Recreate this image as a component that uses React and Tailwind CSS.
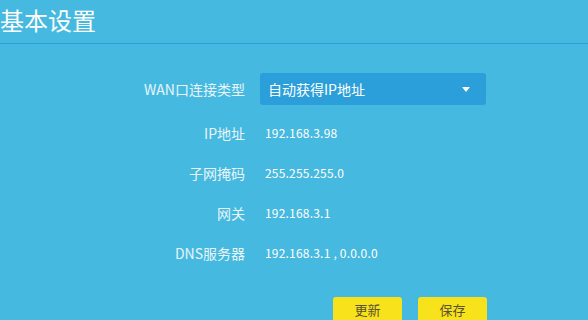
const rows = [
  { label: 'IP地址', value: '192.168.3.98' },
  { label: '子网掩码', value: '255.255.255.0' },
  { label: '网关', value: '192.168.3.1' },
  { label: 'DNS服务器', value: '192.168.3.1 , 0.0.0.0' },
]

function App() {
  return (
    <div
      className="h-[320px] w-[588px] overflow-hidden bg-[#46b9e0] text-white"
      style={{ fontFamily: '"Microsoft YaHei", "Noto Sans CJK SC", sans-serif' }}
    >
      {/* Header */}
      <div className="h-[44px] border-b border-[#2f9dd8]">
        <h1 className="pt-[5px] text-[24px] leading-[30px] font-normal">基本设置</h1>
      </div>

      {/* Form */}
      <div className="flex flex-col pt-[29px]">
        <div className="flex h-8 items-center">
          <label className="w-[245px] text-right text-[14px] text-[#e6f5fb]">WAN口连接类型</label>
          <div className="ml-[15px] flex h-8 w-[226px] items-center justify-between rounded-[3px] bg-[#2b9fd9] pl-[8px] pr-[16px] text-[14px]">
            <span>自动获得IP地址</span>
            <span className="h-0 w-0 border-x-[4px] border-t-[5px] border-x-transparent border-t-white" />
          </div>
        </div>

        <div className="mt-2 flex flex-col">
          {rows.map((row) => (
            <div key={row.label} className="flex h-10 items-center">
              <label className="w-[245px] text-right text-[14px] text-[#e6f5fb]">{row.label}</label>
              <span className="ml-[20px] text-[12px] tracking-[0.2px]">{row.value}</span>
            </div>
          ))}
        </div>

        {/* Actions */}
        <div className="mt-[24px] flex gap-4 pl-[333px]">
          <button className="h-[26px] w-[69px] rounded-[3px] bg-[#f7e21b] text-[13px] text-[#5a5233]">更新</button>
          <button className="h-[26px] w-[69px] rounded-[3px] bg-[#f7e21b] text-[13px] text-[#5a5233]">保存</button>
        </div>
      </div>
    </div>
  )
}

export default App
